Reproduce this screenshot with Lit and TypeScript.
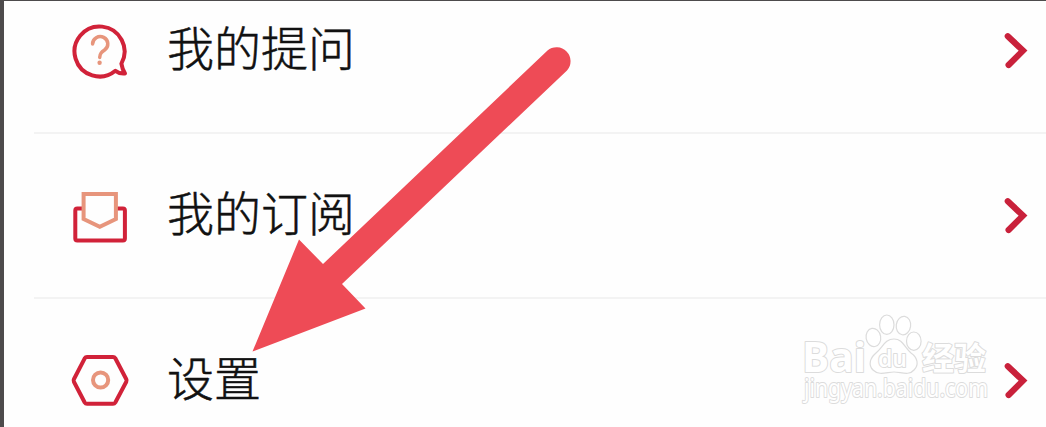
import {LitElement, html, css, svg} from 'lit';
import {customElement, property} from 'lit/decorators.js';


const icons = {
    question: svg`
        <path class="red" d="M51.4 42.6A25 25 0 1 0 45.4 49.8Q49.6 53 55 52.4Q52.4 48.8 51.4 42.6Z"/>
        <path class="peach thin" d="M22.6 23a7.6 7.4 0 1 1 12 6c-3 2.1-4.7 3.3-4.9 7.4"/>
        <circle class="dot" cx="29.6" cy="41.8" r="2.2"/>
    `,
    mail: svg`
        <path class="red" d="M12.5 22.5H7.3a2 2 0 0 0-2 2V52.4a2 2 0 0 0 2 2h45.6a2 2 0 0 0 2-2V24.5a2 2 0 0 0-2-2h-5"/>
        <path class="peach" d="M13.6 8H45.9V33L29.8 40.8L13.6 33Z"/>
    `,
    settings: svg`
        <path class="red" d="M17 6H43Q44.5 6 45.3 7.3L56.3 28.2Q57 29.5 56.3 30.8L45.3 51.5Q44.5 52.8 43 52.8H17Q15.5 52.8 14.7 51.5L3.9 30.8Q3.2 29.5 3.9 28.2L14.7 7.3Q15.5 6 17 6Z"/>
        <circle class="peach" cx="30.6" cy="29" r="7.6"/>
    `,
};

@customElement('menu-row')
class MenuRow extends LitElement {

    @property()
    label: string = '';

    @property()
    icon: keyof typeof icons = 'question';

    render() {
        return html`
            <svg class="icon" width="60" height="60" viewBox="0 0 60 60">${icons[this.icon]}</svg>
            <span class="label">${this.label}</span>
            <svg class="chevron" width="28" height="40" viewBox="0 0 28 40"><path d="M3.8 5.2L19 19.6L4.6 34"/></svg>
        `;
    }

    static styles = css`

        :host {
            display: flex;
            align-items: center;
            box-sizing: border-box;
            height: 165px;
            padding: 0 14px 0 36px;
            border-bottom: 2px solid #f3f3f3;
        }

        .icon {
            flex: none;
            fill: none;
            stroke-linejoin: round;
            stroke-linecap: round;
        }

        .red {
            stroke: #d12239;
            stroke-width: 4;
        }

        .peach {
            stroke: #e7957c;
            stroke-width: 4;
            stroke-linejoin: miter;
        }

        .thin {
            stroke-width: 3.5;
        }

        .dot {
            fill: #e7957c;
        }

        .label {
            flex: 1;
            margin-left: 37px;
            padding-bottom: 10px;
            font-size: 47px;
            font-weight: 300;
            line-height: 60px;
            color: #111;
            -webkit-text-stroke: 0.5px #111;
        }

        .chevron {
            fill: none;
            stroke: #c9213b;
            stroke-width: 6.2;
            stroke-linecap: round;
        }
    `;
}

@customElement('app-root')
class AppRoot extends LitElement {

    render() {
        return html`
            <div class="list">
                <menu-row icon="question" label="我的提问"></menu-row>
                <menu-row icon="mail" label="我的订阅"></menu-row>
                <menu-row icon="settings" label="设置"></menu-row>
            </div>
            <svg class="arrow" width="330" height="315" viewBox="248 40 330 315">
                <path d="M252.5 351.5L299 239.5L323 264L547.5 50.5A14 14 0 0 1 567 70.5L342 284L365.5 308.5Z"/>
            </svg>
            <svg class="watermark" width="200" height="115" viewBox="796 308 200 115">
                <text class="logo" x="802" y="372" font-size="41" textLength="64" lengthAdjust="spacingAndGlyphs">Bai</text>
                <ellipse cx="873.3" cy="337.5" rx="7.3" ry="9.2" transform="rotate(-10 873 337)"/>
                <ellipse cx="886.8" cy="324.7" rx="7.2" ry="9.7"/>
                <ellipse cx="903.5" cy="325.5" rx="7.2" ry="9.3" transform="rotate(8 903 325)"/>
                <ellipse cx="913.8" cy="341.2" rx="7.3" ry="9.2"/>
                <path d="M894 339C885 339 883 347 876 353C870 358 868 365 873 370C879 376 887 372 894 372C901 372 909 376 914 370C919 365 918 358 911 353C904 347 903 339 894 339Z"/>
                <text class="du" x="878" y="367" font-size="23" textLength="29" lengthAdjust="spacingAndGlyphs">du</text>
                <text class="cjk" x="922" y="370" font-size="32" textLength="64" lengthAdjust="spacingAndGlyphs">经验</text>
                <text class="url" x="804" y="396.5" font-size="25" textLength="184" lengthAdjust="spacingAndGlyphs">jingyan.baidu.com</text>
            </svg>
        `;
    }

    static styles = css`

        :host {
            display: block;
            position: relative;
            box-sizing: border-box;
            height: 427px;
            overflow: hidden;
            background: #fefefe;
            border-left: 4px solid #4d4b4c;
            border-top: 1px solid #4d4b4c;
            font-family: "Noto Sans CJK SC", sans-serif;
        }

        .list {
            margin: -32px 0 0 30px;
        }

        menu-row:last-child {
            border-bottom-color: transparent;
        }

        .arrow {
            position: absolute;
            left: 244px;
            top: 39px;
            fill: #ee4b56;
        }

        .watermark {
            position: absolute;
            left: 792px;
            top: 307px;
            fill: #fff;
            stroke: #dcdcdc;
            stroke-width: 1.2;
            stroke-linejoin: round;
        }

        .watermark text {
            stroke-width: 2;
            paint-order: stroke;
        }

        .logo {
            font-family: "Open Sans", sans-serif;
            font-weight: 700;
        }

        .du {
            font-family: "Open Sans", sans-serif;
            font-weight: 600;
        }

        .cjk {
            font-weight: 700;
        }

        .url {
            font-family: "Noto Sans", sans-serif;
        }
    `;
}
